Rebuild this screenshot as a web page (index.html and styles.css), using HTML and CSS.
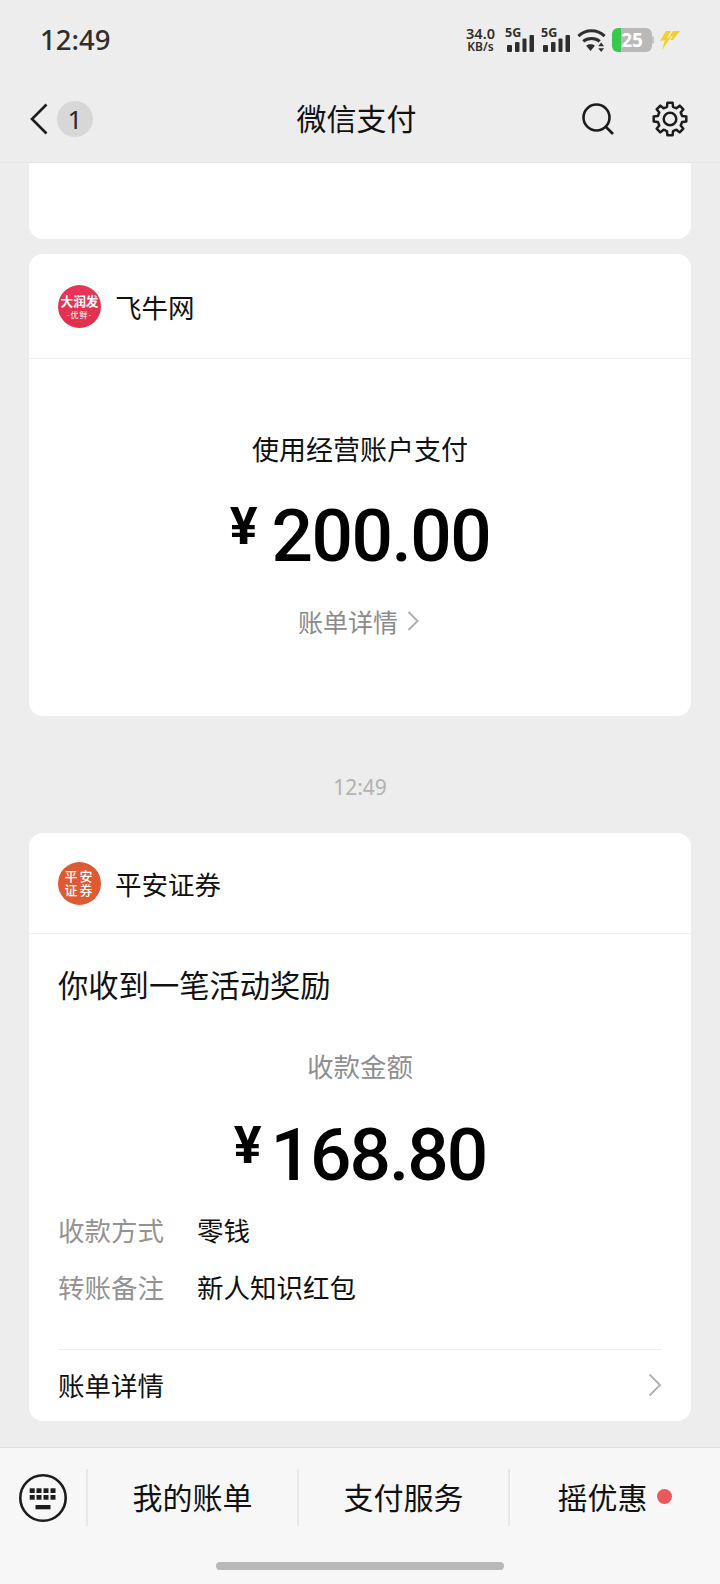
FILE: index.html
```html
<!DOCTYPE html>
<html lang="en">
<head>
    <meta charset="UTF-8">
    <meta name="viewport" content="width=device-width, initial-scale=1.0">
    <title>微信支付</title>
    <link rel="stylesheet" href="styles.css">
</head>
<body>

    <div id="pagewrap">

        <!-- Status bar -->
        <div class="statusbar">
            <span class="clock">12:49</span>
            <div class="status-icons">
                <div class="netspeed"><span>34.0</span><span>KB/s</span></div>
                <div class="signal">
                    <span class="signal-label">5G</span>
                    <svg width="27" height="17" viewBox="0 0 27 17"><g fill="#2e2e2e"><rect x="0" y="10" width="5" height="7" rx="1"/><rect x="8" y="7" width="4.500" height="10" rx="1"/><rect x="15.500" y="3.500" width="4" height="13.500" rx="1"/><rect x="22.500" y="0" width="4.500" height="17" rx="1"/></g></svg>
                </div>
                <div class="signal">
                    <span class="signal-label">5G</span>
                    <svg width="27" height="17" viewBox="0 0 27 17"><g fill="#2e2e2e"><rect x="0" y="10" width="5" height="7" rx="1"/><rect x="8" y="7" width="4.500" height="10" rx="1"/><rect x="15.500" y="3.500" width="4" height="13.500" rx="1"/><rect x="22.500" y="0" width="4.500" height="17" rx="1"/></g></svg>
                </div>
                <svg class="wifi" width="29" height="26" viewBox="0 0 30 26"><g fill="none" stroke="#2e2e2e" stroke-width="3.200"><path d="M1.500 9C9 1.500 21 1.500 28.500 9"/><path d="M6.500 14.500C11 10.500 19 10.500 23.500 14.500"/></g><path d="M9.500 19C12 17 16 17 18.500 19L14 24.500Z" fill="#2e2e2e"/><path d="M22 19.500h6l-3-4zM22 21.500h6l-3 4z" fill="#2e2e2e"/></svg>
                <div class="battery"><span class="battery-num">25</span></div>
                <svg class="bolt" width="20" height="21" viewBox="0 0 20 21"><path d="M6 1h5L7 8l4-1L2 20l3-10-5 1zM13 1h7l-7 9h-3l3-4-4 1z" fill="#f4cf27"/></svg>
            </div>
        </div>

        <!-- Navigation bar -->
        <nav class="navbar">
            <div class="nav-left">
                <svg width="18" height="32" viewBox="0 0 18 32"><path d="M16.500 1.500L2 16l14.500 14.500" fill="none" stroke="#1c1c1c" stroke-width="2.600"/></svg>
                <span class="unread">1</span>
            </div>
            <h1 class="nav-title">微信支付</h1>
            <div class="nav-right">
                <svg width="32" height="32" viewBox="0 0 32 32"><g fill="none" stroke="#1c1c1c" stroke-width="2.600"><circle cx="14.500" cy="14.500" r="13"/><path d="M24 24l7 7"/></g></svg>
                <svg width="36" height="36" viewBox="0 0 36 36"><g fill="none" stroke="#1c1c1c" stroke-width="2.500" stroke-linejoin="round"><circle cx="18" cy="18" r="6.300"/><polygon points="14.98,5.87 15.42,1.7 20.58,1.7 21.02,5.87 24.44,7.29 27.7,4.65 31.35,8.3 28.71,11.56 30.13,14.98 34.3,15.42 34.3,20.58 30.13,21.02 28.71,24.44 31.35,27.7 27.7,31.35 24.44,28.71 21.02,30.13 20.58,34.3 15.42,34.3 14.98,30.13 11.56,28.71 8.3,31.35 4.65,27.7 7.29,24.44 5.87,21.02 1.7,20.58 1.7,15.42 5.87,14.98 7.29,11.56 4.65,8.3 8.3,4.65 11.56,7.29"/></g></svg>
            </div>
        </nav>

        <!-- Messages -->
        <main class="messages">
            <div class="card card-stub"></div>

            <section class="card card-pay">
                <div class="card-head">
                    <div class="avatar avatar-red"><span class="avatar-big">大润发</span><span class="avatar-small">-优鲜-</span></div>
                    <span class="card-name">飞牛网</span>
                </div>
                <div class="pay-body">
                    <p class="pay-label">使用经营账户支付</p>
                    <div class="amount"><span class="yen">¥</span><span>200.00</span></div>
                    <div class="bill-link">账单详情
                        <svg width="12" height="20" viewBox="0 0 12 20"><path d="M1.500 1L10.500 10l-9 9" fill="none" stroke="#b0b0b0" stroke-width="2"/></svg>
                    </div>
                </div>
            </section>

            <div class="time">12:49</div>

            <section class="card card-receive">
                <div class="card-head">
                    <div class="avatar avatar-orange"><span>平安</span><span>证券</span></div>
                    <span class="card-name">平安证券</span>
                </div>
                <div class="receive-body">
                    <h2 class="receive-title">你收到一笔活动奖励</h2>
                    <p class="receive-label">收款金额</p>
                    <div class="amount amount-receive"><span class="yen">¥</span><span>168.80</span></div>
                    <div class="detail-row"><span class="detail-key">收款方式</span><span>零钱</span></div>
                    <div class="detail-row"><span class="detail-key">转账备注</span><span>新人知识红包</span></div>
                    <div class="bill-row">
                        <span>账单详情</span>
                        <svg width="14" height="24" viewBox="0 0 14 24"><path d="M1.500 1.500L12 12 1.500 22.500" fill="none" stroke="#b4b4b4" stroke-width="2"/></svg>
                    </div>
                </div>
            </section>
        </main>

        <!-- Bottom menu -->
        <footer class="menubar">
            <div class="menu-items">
                <div class="menu-key">
                    <svg width="48" height="48" viewBox="0 0 48 48">
                        <circle cx="24" cy="24" r="22.700" fill="none" stroke="#1c1c1c" stroke-width="2.600"/>
                        <g fill="#1c1c1c">
                            <rect x="10.700" y="14.300" width="5" height="4.700"/><rect x="17.500" y="14.300" width="5" height="4.700"/><rect x="24.500" y="14.300" width="5" height="4.700"/><rect x="31.500" y="14.300" width="5" height="4.700"/>
                            <rect x="10.700" y="21" width="5" height="4.700"/><rect x="17.500" y="21" width="5" height="4.700"/><rect x="24.500" y="21" width="5" height="4.700"/><rect x="31.500" y="21" width="5" height="4.700"/>
                            <rect x="16.500" y="31" width="15" height="4.300"/>
                        </g>
                    </svg>
                </div>
                <div class="menu-item">我的账单</div>
                <div class="menu-item">支付服务</div>
                <div class="menu-item">摇优惠<span class="red-dot"></span></div>
            </div>
            <div class="home-bar"></div>
        </footer>

    </div>

</body>
</html>
```

FILE: styles.css
```css
/* General styles */
* {
    box-sizing: border-box;
}

body {
    margin: 0;
    font-family: "Noto Sans CJK SC", "Noto Sans", sans-serif;
    background-color: #ededed;
    color: #111;
}

#pagewrap {
    display: flex;
    flex-direction: column;
    width: 720px;
    height: 1584px;
    overflow: hidden;
}

/* Status bar */
.statusbar {
    display: flex;
    justify-content: space-between;
    align-items: center;
    height: 80px;
    padding: 0 40px;
}

.clock {
    margin-bottom: 2px;
    font-family: "Noto Sans", sans-serif;
    font-size: 27.500px;
    font-weight: 500;
    color: #2e2e2e;
}

.status-icons {
    display: flex;
    align-items: center;
    gap: 7px;
}

.netspeed {
    display: flex;
    flex-direction: column;
    align-items: center;
    width: 31px;
    margin-right: 4px;
    font-family: "Noto Sans", sans-serif;
    font-size: 14.500px;
    font-weight: 600;
    line-height: 14px;
    color: #2e2e2e;
}

.netspeed span:last-child {
    font-size: 12px;
}

.signal {
    display: flex;
    flex-direction: column;
    justify-content: flex-end;
    position: relative;
    width: 27px;
    height: 24px;
}

.signal + .signal {
    margin-left: 2px;
}

.signal-label {
    position: absolute;
    left: -2px;
    top: -4px;
    font-family: "Noto Sans", sans-serif;
    font-size: 12.500px;
    font-weight: 700;
    color: #2e2e2e;
}

.battery {
    position: relative;
    width: 40px;
    height: 24px;
    margin-left: -1px;
    border-radius: 6px;
    background: linear-gradient(to right, #35c94d 9px, #b9b9b9 9px);
    text-align: center;
}

/* small nub on the right of the battery */
.battery::after {
    content: "";
    position: absolute;
    right: -2px;
    top: 8px;
    width: 2px;
    height: 8px;
    border-radius: 0 2px 2px 0;
    background-color: #c4c4c4;
}

.battery-num {
    font-family: "Noto Sans", sans-serif;
    font-size: 19px;
    font-weight: 700;
    line-height: 24px;
    color: #fff;
}

.bolt {
    margin-left: 1px;
}

/* Navigation bar */
.navbar {
    display: flex;
    justify-content: space-between;
    align-items: center;
    position: relative;
    height: 83px;
    padding: 0 32px 5px 30px;
    border-bottom: 1px solid #e6e6e6;
}

.nav-left {
    display: flex;
    align-items: center;
    gap: 9px;
}

.unread {
    display: flex;
    justify-content: center;
    align-items: center;
    width: 36px;
    height: 36px;
    border-radius: 50%;
    background-color: #d7d7d7;
    font-family: "Noto Sans", sans-serif;
    font-size: 26px;
    color: #2a2a2a;
}

.nav-title {
    position: absolute;
    left: 0;
    right: 7px;
    margin: 0 0 4px;
    text-align: center;
    font-size: 30px;
    font-weight: 400;
}

.nav-right {
    display: flex;
    align-items: center;
    gap: 38px;
}

/* Messages */
.messages {
    flex: 1;
    display: flex;
    flex-direction: column;
    padding: 0 29px;
    overflow: hidden;
}

.card {
    flex: none;
    background-color: #fff;
    border-radius: 14px;
}

.card-stub {
    height: 76px;
    border-radius: 0 0 14px 14px;
    margin-bottom: 15px;
}

.card-pay {
    height: 462px;
}

.card-receive {
    height: 588px;
}

.time {
    flex: none;
    height: 117px;
    line-height: 142px;
    text-align: center;
    font-family: "Noto Sans", sans-serif;
    font-size: 21px;
    color: #b2b2b2;
}

.card-head {
    display: flex;
    align-items: center;
    gap: 14px;
    height: 105px;
    padding: 0 29px;
    border-bottom: 1px solid #eee;
}

.card-receive .card-head {
    height: 101px;
}

.card-name {
    font-size: 26.500px;
}

.avatar {
    display: flex;
    flex-direction: column;
    justify-content: center;
    align-items: center;
    width: 43px;
    height: 43px;
    border-radius: 50%;
    color: #fff;
}

.avatar-red {
    background: linear-gradient(#e8355a, #e02f4b);
}

.avatar-big {
    font-size: 12.700px;
    font-weight: 700;
    line-height: 16px;
}

.avatar-small {
    font-size: 8px;
    line-height: 11px;
    letter-spacing: 1px;
}

.avatar-orange {
    background-color: #de5a32;
    font-size: 13px;
    font-weight: 500;
    line-height: 14px;
    letter-spacing: 2px;
}

/* Payment card */
.pay-body {
    display: flex;
    flex-direction: column;
    align-items: center;
}

.pay-label {
    margin: 70px 0 0;
    font-size: 27px;
    line-height: 40px;
}

.amount {
    display: flex;
    align-items: flex-start;
    justify-content: center;
    gap: 14px;
    margin-top: 22px;
    font-family: Roboto, sans-serif;
    font-size: 73px;
    font-weight: 500;
    line-height: 90px;
    letter-spacing: -1.500px;
    color: #000;
}

.yen {
    font-size: 52px;
    line-height: 72px;
    font-weight: 700;
    letter-spacing: 0;
}

.bill-link {
    display: flex;
    align-items: center;
    gap: 9px;
    margin-top: 20px;
    padding-right: 3px;
    font-size: 25px;
    line-height: 40px;
    color: #8b8b8b;
}

/* Receive card */
.receive-body {
    padding: 0 29px;
}

.receive-title {
    margin: 28px 0 0;
    font-size: 30.300px;
    font-weight: 400;
    line-height: 44px;
}

.receive-label {
    margin: 40px 0 0;
    font-size: 26.500px;
    line-height: 40px;
    text-align: center;
    color: #8f8f8f;
}

.amount-receive {
    margin-top: 24px;
    margin-bottom: 10px;
    gap: 9px;
    letter-spacing: -2px;
}

.detail-row {
    display: flex;
    gap: 33px;
    margin-bottom: 17px;
    font-size: 26.500px;
    line-height: 40px;
}

.detail-key {
    color: #939393;
}

.bill-row {
    display: flex;
    justify-content: space-between;
    align-items: center;
    height: 70px;
    margin-top: 42px;
    border-top: 1px solid #f0f0f0;
    font-size: 26.500px;
}

/* Bottom menu */
.menubar {
    flex: none;
    position: relative;
    height: 137px;
    background-color: #f7f7f7;
    border-top: 1px solid #dedede;
}

.menu-items {
    display: flex;
    align-items: center;
    padding-top: 21px;
}

.menu-key {
    display: flex;
    align-items: center;
    justify-content: center;
    width: 86px;
    height: 57px;
}

.menu-item {
    display: flex;
    justify-content: center;
    align-items: center;
    width: 211px;
    height: 57px;
    padding-bottom: 3px;
    border-left: 2px solid #e8e8e8;
    font-size: 30px;
}

.red-dot {
    width: 15px;
    height: 15px;
    margin-left: 9px;
    border-radius: 50%;
    background-color: #ea5a5a;
}

.home-bar {
    position: absolute;
    left: 216px;
    bottom: 14px;
    width: 288px;
    height: 8px;
    border-radius: 4px;
    background-color: #b8b8b8;
}
```
